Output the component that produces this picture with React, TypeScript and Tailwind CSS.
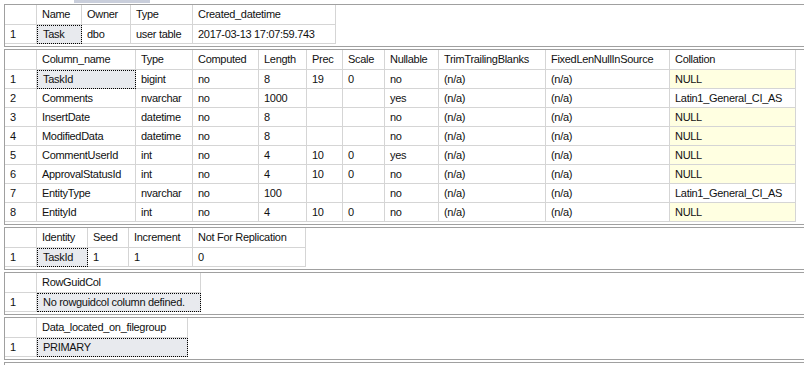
import React from "react";

type Grid = {
  headers: string[];
  widths: number[];
  rows: (string | null)[][];
};

const grids: Grid[] = [
  {
    headers: ["Name", "Owner", "Type", "Created_datetime"],
    widths: [45, 49, 62, 143],
    rows: [["Task", "dbo", "user table", "2017-03-13 17:07:59.743"]],
  },
  {
    headers: [
      "Column_name",
      "Type",
      "Computed",
      "Length",
      "Prec",
      "Scale",
      "Nullable",
      "TrimTrailingBlanks",
      "FixedLenNullInSource",
      "Collation",
    ],
    widths: [99, 57, 66, 48, 36, 42, 54, 107, 124, 126],
    rows: [
      ["TaskId", "bigint", "no", "8", "19", "0", "no", "(n/a)", "(n/a)", null],
      ["Comments", "nvarchar", "no", "1000", "", "", "yes", "(n/a)", "(n/a)", "Latin1_General_CI_AS"],
      ["InsertDate", "datetime", "no", "8", "", "", "no", "(n/a)", "(n/a)", null],
      ["ModifiedData", "datetime", "no", "8", "", "", "no", "(n/a)", "(n/a)", null],
      ["CommentUserId", "int", "no", "4", "10", "0", "yes", "(n/a)", "(n/a)", null],
      ["ApprovalStatusId", "int", "no", "4", "10", "0", "no", "(n/a)", "(n/a)", null],
      ["EntityType", "nvarchar", "no", "100", "", "", "no", "(n/a)", "(n/a)", "Latin1_General_CI_AS"],
      ["EntityId", "int", "no", "4", "10", "0", "no", "(n/a)", "(n/a)", null],
    ],
  },
  {
    headers: ["Identity", "Seed", "Increment", "Not For Replication"],
    widths: [51, 41, 64, 113],
    rows: [["TaskId", "1", "1", "0"]],
  },
  {
    headers: ["RowGuidCol"],
    widths: [164],
    rows: [["No rowguidcol column defined."]],
  },
  {
    headers: ["Data_located_on_filegroup"],
    widths: [151],
    rows: [["PRIMARY"]],
  },
];

const ResultPane = ({ grid }: { grid: Grid }) => {
  return (
    <div className="mb-[2px] border-y border-l border-[#a0a0a0] bg-white pb-[2px]">
      {/* header row */}
      <div className="flex">
        <div className="h-[20px] w-[32px] shrink-0 border-b border-r border-[#d5d5d5]" />
        {grid.headers.map((h, i) => (
          <div
            key={h}
            className="flex h-[20px] shrink-0 items-center overflow-hidden whitespace-nowrap border-b border-r border-[#d5d5d5] pl-[5px]"
            style={{ width: grid.widths[i] }}
          >
            {h}
          </div>
        ))}
      </div>

      {grid.rows.map((row, r) => (
        <div key={r} className="flex">
          <div className="flex h-[19px] w-[32px] shrink-0 items-center border-b border-r border-[#d5d5d5] pl-[5px]">
            {r + 1}
          </div>
          {row.map((cell, c) => {
            const selected = r === 0 && c === 0;
            const isNull = cell === null;
            return (
              <div
                key={c}
                className={
                  "flex h-[19px] shrink-0 items-center overflow-hidden whitespace-nowrap border-b border-r border-[#d5d5d5] pl-[5px] " +
                  (selected
                    ? "bg-[#e8eaee] outline-1 -outline-offset-1 outline-dotted outline-black pl-[6px]"
                    : isNull
                    ? "bg-[#ffffe1]"
                    : "")
                }
                style={{ width: grid.widths[c] }}
              >
                {isNull ? "NULL" : cell}
              </div>
            );
          })}
        </div>
      ))}
    </div>
  );
};

export default function App() {
  return (
    <div
      className="h-[365px] w-[804px] overflow-hidden bg-white text-[11px] tracking-[-0.3px] text-[#111]"
      style={{ fontFamily: '"Liberation Sans", Arial, sans-serif' }}
    >
      {/* remains of the pane above */}
      <div className="flex h-[4px]">
        <div className="ml-[74px] h-[3px] w-[76px] bg-[#c9cedb]" />
      </div>
      <div className="pl-[4px]">
        {grids.map((g, i) => (
          <ResultPane key={i} grid={g} />
        ))}
        <div className="h-[10px] border-l border-t border-[#a0a0a0]" />
      </div>
    </div>
  );
}
